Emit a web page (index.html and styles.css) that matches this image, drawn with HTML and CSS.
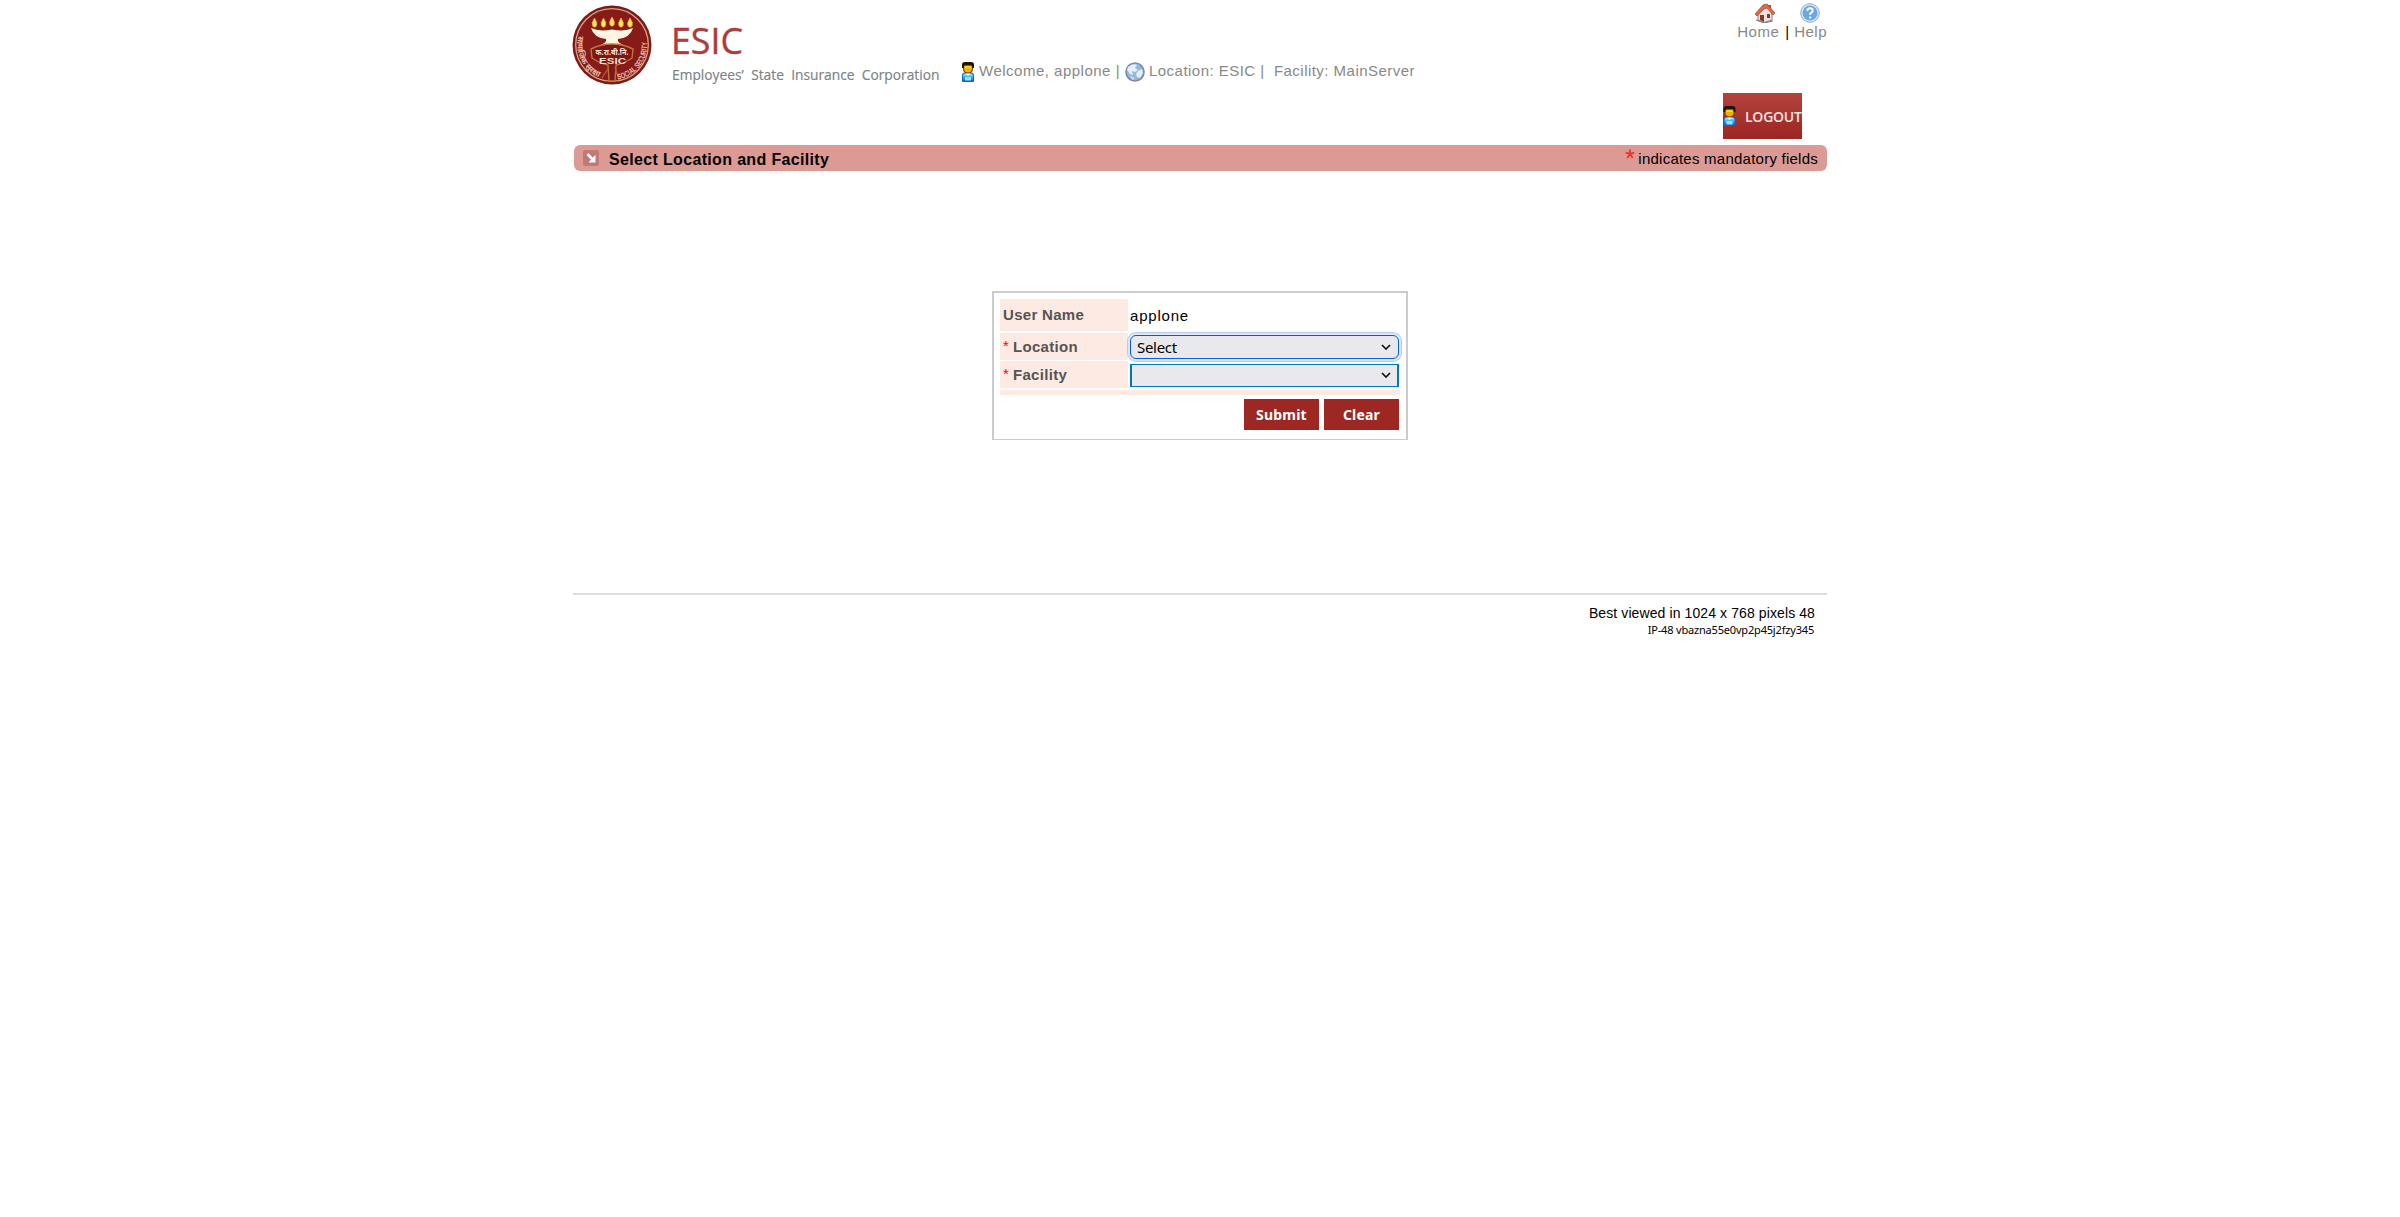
FILE: index.html
```html
<!DOCTYPE html>
<html lang="en">
<head>
<meta charset="utf-8">
<title>ESIC - Select Location and Facility</title>
<link rel="stylesheet" href="styles.css">
</head>
<body>
<svg class="defs" width="0" height="0" aria-hidden="true">
  <defs>
    <linearGradient id="shirt" x1="0" y1="0" x2="0" y2="1"><stop offset="0" stop-color="#b9efff"/><stop offset=".5" stop-color="#3fb4fa"/><stop offset="1" stop-color="#147ce0"/></linearGradient>
    <symbol id="user" viewBox="0 0 12 20">
      <path d="M0 19V14Q0 10.500 3 10.500H9Q12 10.500 12 14V19Q12 20 11 20H1Q0 20 0 19Z" fill="#1264c4"/>
      <path d="M1 18V14Q1 11.500 3 11.500H9Q11 11.500 11 14V18Z" fill="url(#shirt)"/>
      <rect x="3" y="15" width="6" height="3.500" fill="#9be2ff"/>
      <path d="M3.500 10.500H8.500L6 14Z" fill="#fff"/>
      <path d="M1 3H11V8Q10 11.500 6 11.500T1 8Z" fill="#6d4600"/>
      <path d="M2 3H10V8Q9 10.500 6 10.500T2 8Z" fill="#efb000"/>
      <path d="M0 6V2.500Q0 0 3 0H9Q12 0 12 2.500V6H10.500L9.500 3.500H2.500L1.500 6Z" fill="#211500"/>
      <path d="M3 4.500H9V6H3Z" fill="#ffd94a"/>
    </symbol>
  </defs>
</svg>
<div class="page">
  <header class="header">
    <svg class="seal" viewBox="0 0 80 80">
      <defs>
        <path id="arcLeft" d="M6.500 31A34.500 34.500 0 0 0 34 74"/>
        <path id="arcRight" d="M46 74.500A35 35 0 0 0 74.500 33"/>
      </defs>
      <circle cx="40" cy="40" r="39.500" fill="#7c1a17"/>
      <circle cx="40" cy="40" r="36.300" fill="#861b18" stroke="#d9a183" stroke-width="1.300"/>
      <g fill="#ffe76b" stroke="#e39a1e" stroke-width=".8">
        <path id="flame" d="M22.500 13Q26 18 24.500 21Q22.500 23.500 20.500 21Q19 18 22.500 13Z"/>
        <use href="#flame" x="9"/><use href="#flame" x="17.500" y="-1"/><use href="#flame" x="26.500"/><use href="#flame" x="35.500"/>
      </g>
      <path d="M19 23Q27 27 40 24.500Q53 27 61 23Q58 33 46 34Q44 38 56 42Q40 39 24 42Q36 38 34 34Q22 33 19 23Z" fill="#fff5e2"/>
      <path d="M19 44Q40 34 61 44L60 53Q51 59 44 60L43 76H37L36 60Q29 59 20 53Z" fill="#7c1713" stroke="#bd7440" stroke-width="1.400"/>
      <path d="M37 62L30 73M43 62L47 75" stroke="#ae6239" stroke-width="1.300"/>
      <text x="40" y="49.500" class="seal-hindi" textLength="33" lengthAdjust="spacingAndGlyphs">क.रा.बी.नि.</text>
      <text x="40.500" y="58.500" class="seal-name" textLength="27" lengthAdjust="spacingAndGlyphs">ESIC</text>
      <text class="seal-ring"><textPath href="#arcLeft" textLength="50" lengthAdjust="spacingAndGlyphs">सामाजिक सुरक्षा</textPath></text>
      <text class="seal-ring"><textPath href="#arcRight" textLength="52" lengthAdjust="spacingAndGlyphs">SOCIAL SECURITY</textPath></text>
    </svg>
    <svg class="wordmark" viewBox="0 0 270 64">
      <text x="-1" y="34" class="wm-name" textLength="72" lengthAdjust="spacingAndGlyphs">ESIC</text>
      <text x="0" y="60" class="wm-full" textLength="267.500" lengthAdjust="spacingAndGlyphs">Employees’ State Insurance Corporation</text>
    </svg>
    <div class="session">
      <svg class="s-user"><use href="#user"/></svg>
      <span class="s-welcome">Welcome, applone |</span>
      <svg class="s-globe" viewBox="0 0 20 20">
        <circle cx="10" cy="10" r="9" fill="#91b8df" stroke="#7d8ba5" stroke-width="1.600"/>
        <path d="M3 5Q8 1 12 3L10 6 13 8 10 10 7 9 8 13 5 12 2 8ZM13 9L17 7 18 11 15 16 12 15 11 12ZM5 14l4 2-1 2z" fill="#e6eef7"/>
      </svg>
      <span class="s-place">Location: ESIC |&nbsp; Facility: MainServer</span>
    </div>
    <nav class="links">
      <a class="link link-home">
        <svg viewBox="0 0 20 20" width="20" height="20">
          <path d="M3 10V17L9 19.500 17 17V9L11 3Z" fill="#e8e3e0" stroke="#8a8380"/>
          <path d="M13 2h3v5l-3-2z" fill="#b94a32"/>
          <path d="M0 11L8 2 12 1 20 10 18 12 12 5 9 6 2 13Z" fill="#dc684a" stroke="#ab452e" stroke-width=".7"/>
          <path d="M5 12h4v7l-4-2zM12 11h3v4h-3z" fill="#8c3425"/>
          <path d="M1 17l8 3 9-2" fill="none" stroke="#777" stroke-width="1"/>
        </svg>
        <span>Home</span>
      </a>
      <span class="bar">|</span>
      <a class="link link-help">
        <svg viewBox="0 0 20 20" width="20" height="20">
          <circle cx="10" cy="10" r="9.300" fill="#dce8f3" stroke="#8fa9c4"/>
          <circle cx="10" cy="10" r="7.500" fill="#67a8e6"/>
          <path d="M7.300 8Q7.300 5.300 10 5.300T12.700 7.700Q12.700 9.300 10.200 10.300V12M10.200 13.500v2" fill="none" stroke="#fff" stroke-width="1.900"/>
        </svg>
        <span>Help</span>
      </a>
    </nav>
  </header>
  <div class="logout-row">
    <button class="logout"><svg><use href="#user"/></svg><span>LOGOUT</span></button>
  </div>
  <div class="title-bar">
    <svg class="title-icon" viewBox="0 0 16 16">
      <rect width="16" height="16" rx="2" fill="#c47974"/>
      <path d="M3.500 5L5.500 3 9.500 7.500 12.500 5V12.500H5.500L8 9.500Z" fill="#fff"/>
    </svg>
    <h1>Select Location and Facility</h1>
    <svg class="star" viewBox="0 0 10 10"><path d="M5 5V.5M5 5L.7 3.600M5 5L9.300 3.600M5 5L2.300 9M5 5L7.700 9" stroke="#e8392f" stroke-width="1.900"/></svg>
    <span class="mandatory">indicates mandatory fields</span>
  </div>
  <main class="main">
    <form class="panel">
      <div class="row row-user"><div class="label"><span>User Name</span></div><div class="field value">applone</div></div>
      <div class="row row-loc"><div class="label"><i>*</i><span>Location</span></div>
        <div class="field"><div class="select focused"><span>Select</span><svg viewBox="0 0 10 6"><path d="M1 1L5 5 9 1"/></svg></div></div></div>
      <div class="row row-fac"><div class="label"><i>*</i><span>Facility</span></div>
        <div class="field"><div class="select square"><span></span><svg viewBox="0 0 10 6"><path d="M1 1L5 5 9 1"/></svg></div></div></div>
      <div class="strip"></div>
      <div class="actions"><button type="button">Submit</button><button type="button">Clear</button></div>
    </form>
  </main>
  <footer class="footer">
    <p class="best">Best viewed in 1024 x 768 pixels 48</p>
    <p class="ip">IP-48 vbazna55e0vp2p45j2fzy345</p>
  </footer>
</div>
</body>
</html>
```
FILE: styles.css
```css
* { box-sizing: border-box; }
body { margin: 0; background: #fff; color: #000; font-family: "Liberation Sans", Arial, sans-serif; }
svg { display: block; flex: none; }
p, h1 { margin: 0; }
span { white-space: nowrap; }
button { font: inherit; border: 0; padding: 0; }
.defs { height: 0; }
.page { width: 1254px; margin: 0 auto; }

.header { display: flex; height: 93px; align-items: flex-start; }
.seal { width: 80px; height: 80px; margin: 5px 1px 0 -1px; }
.seal text { fill: #f7ded0; text-anchor: middle; }
.seal .seal-hindi { font: bold 8px "Noto Sans", sans-serif; }
.seal .seal-name { font: bold 8.5px "Liberation Sans", sans-serif; }
.seal .seal-ring { font: bold 8px "Liberation Sans", "Noto Sans", sans-serif; text-anchor: start; fill: #e9bda9; }
.wordmark { width: 270px; height: 64px; margin: 20px 0 0 19px; overflow: visible; }
.wm-name { font: 37px "Open Sans", sans-serif; fill: #ae3c39; stroke: #ae3c39; stroke-width: .4px; }
.wm-full { font: 15px "Open Sans", sans-serif; word-spacing: 4px; fill: #7c8487; stroke: #7c8487; stroke-width: .2px; }

.session { display: flex; align-items: center; margin: 61px 0 0 20px; height: 21px; color: #888; font-size: 15px; line-height: 20px; letter-spacing: .5px; }
.session span { padding-bottom: 2px; }
.s-user { width: 12px; height: 20px; }
.s-welcome { width: 142px; margin-left: 5px; }
.s-globe { width: 20px; height: 20px; margin: 0 4px 0 4px; }
.s-place { letter-spacing: .47px; }

.links { display: flex; margin-left: auto; padding-top: 3px; font-size: 15px; line-height: 17px; letter-spacing: .5px; }
.link { color: #888; display: flex; flex-direction: column; align-items: center; }
.link svg { margin-left: 14px; }
.link-help svg { margin-left: -1px; }
.bar { padding: 20px 5px 0 6px; letter-spacing: 0; }

.logout-row { display: flex; justify-content: flex-end; padding-right: 25px; height: 52px; }
.logout { display: flex; align-items: center; width: 79px; height: 46px; background: linear-gradient(#b3423d, #9c2621); color: #f6e3e1; font: 600 14px/46px "Open Sans", sans-serif; letter-spacing: -.25px; }
.logout svg { width: 13px; height: 20px; }
.logout span { margin-left: 9px; padding-top: 1px; }

.title-bar { display: flex; align-items: center; height: 26px; margin-left: 1px; padding: 0 9px; border-radius: 6px; background: #dc9a95; }
.title-icon { width: 16px; height: 16px; margin-top: -1px; }
.title-bar h1 { margin-left: 10px; font-size: 16px; line-height: 24px; padding-top: 3px; letter-spacing: .34px; white-space: nowrap; }
.star { width: 10px; height: 10px; margin: -9px 3px 0 auto; }
.mandatory { font-size: 15px; letter-spacing: .24px; }

.main { display: flex; justify-content: center; height: 422px; padding-top: 120px; }
.panel { width: 416px; height: 149px; padding: 6px; border: 2px solid #ccc; border-bottom-width: 1px; }
.row { display: flex; margin-bottom: 2px; }
.row-user { height: 32px; }
.row-user .label { padding-bottom: 2px; }
.row-loc, .row-fac { height: 27px; }
.row-loc { margin-bottom: 1px; }
.label { display: flex; align-items: center; width: 128px; padding-left: 3px; background: #fdeae2; color: #555; font-size: 15px; font-weight: bold; letter-spacing: .3px; }
.label i { width: 10px; color: #f00; font-style: normal; font-weight: normal; letter-spacing: 0; padding-bottom: 2px; }
.field { flex: 1; display: flex; align-items: center; padding: 0 1px 0 2px; }
.value { font-size: 15px; letter-spacing: .8px; }
.select { display: flex; align-items: center; justify-content: space-between; width: 269px; height: 24px; padding: 0 7px 0 6px; background: #e9e9ed; font: 15px "Noto Sans", sans-serif; letter-spacing: -.3px; }
.select svg { width: 10px; height: 6px; fill: none; stroke: #111; stroke-width: 1.7; }
.focused { border: 1px solid #0060df; border-radius: 6px; box-shadow: 0 0 0 2px #dce8fa, 0 0 0 3px #b5cbef; }
.square { height: 23px; border: 1px solid #0078bd; border-left-width: 2px; border-right-width: 2px; padding: 0 6px 0 5px; margin-top: 1px; }
.strip { height: 5px; background: #fdeae2; }
.actions { display: flex; justify-content: flex-end; gap: 5px; padding: 4px 1px 0 0; }
.actions button { width: 75px; height: 31px; background: #9d2723; color: #fff; font: bold 14px/31px "Noto Sans", sans-serif; letter-spacing: .2px; }

.footer { border-top: 2px solid #ddd; padding: 9px 12px 0 0; text-align: right; }
.best { font-size: 14px; line-height: 18px; letter-spacing: .1px; }
.ip { font: 11px/16px "Noto Sans", sans-serif; letter-spacing: -.18px; padding-right: 1px; }
```
